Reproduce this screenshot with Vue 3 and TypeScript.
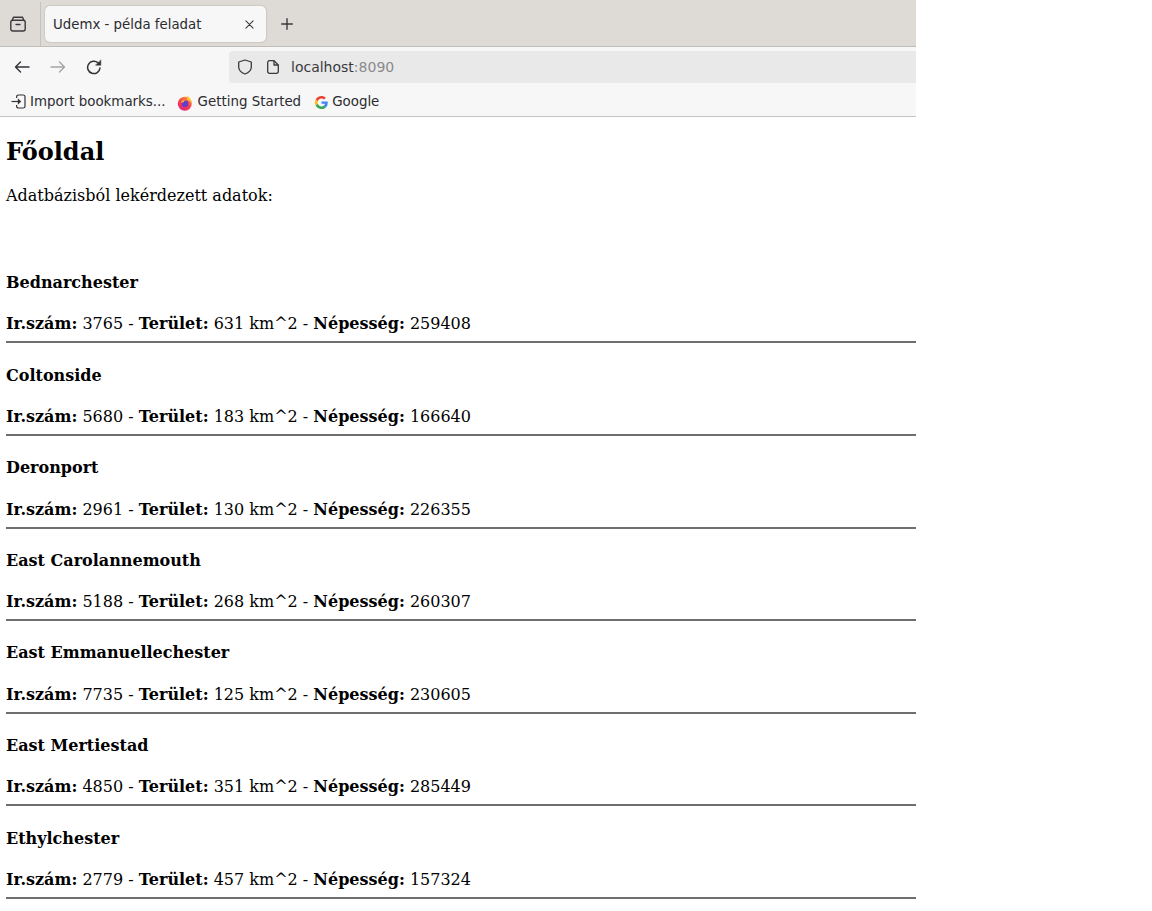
<script setup lang="ts">
interface City { name: string; zip: number; area: number; pop: number }
const cities: City[] = [
  { name: 'Bednarchester', zip: 3765, area: 631, pop: 259408 },
  { name: 'Coltonside', zip: 5680, area: 183, pop: 166640 },
  { name: 'Deronport', zip: 2961, area: 130, pop: 226355 },
  { name: 'East Carolannemouth', zip: 5188, area: 268, pop: 260307 },
  { name: 'East Emmanuellechester', zip: 7735, area: 125, pop: 230605 },
  { name: 'East Mertiestad', zip: 4850, area: 351, pop: 285449 },
  { name: 'Ethylchester', zip: 2779, area: 457, pop: 157324 },
]
</script>

<template>
  <div class="window">
    <div class="tabbar">
      <div class="tabs-btn">
        <svg width="16" height="16" viewBox="0 0 16 16" fill="none" stroke="#3a3a3e" stroke-width="1.4">
          <path d="M3.500 1.200h9" stroke-linecap="round" />
          <path d="M2.200 4.200l1.300-3M13.800 4.200l-1.300-3" />
          <rect x="0.800" y="4.300" width="14.400" height="10.700" rx="2" />
          <path d="M6 8.500h4" stroke-linecap="round" />
        </svg>
      </div>
      <div class="tab">
        <span class="tab-title">Udemx - példa feladat</span>
        <svg class="tab-x" width="9" height="9" viewBox="0 0 10 10" stroke="#3a3a3e" stroke-width="1.200" stroke-linecap="round">
          <path d="M1 1l8 8M9 1l-8 8" />
        </svg>
      </div>
      <svg class="plus" width="12" height="12" viewBox="0 0 12 12" stroke="#3a3a3e" stroke-width="1.400" stroke-linecap="round">
        <path d="M6 .7v10.600M.7 6h10.600" />
      </svg>
    </div>
    <div class="navbar">
      <svg class="nav-ico" width="16" height="16" viewBox="0 0 16 16" fill="none" stroke="#333338" stroke-width="1.400" stroke-linecap="round" stroke-linejoin="round">
        <path d="M15 8H1.500M6.500 3l-5 5 5 5" />
      </svg>
      <svg class="nav-ico" width="16" height="16" viewBox="0 0 16 16" fill="none" stroke="#a5a5a8" stroke-width="1.400" stroke-linecap="round" stroke-linejoin="round">
        <path d="M1 8h13.500M9.500 3l5 5-5 5" />
      </svg>
      <svg class="nav-ico" width="16" height="16" viewBox="0 0 16 16" fill="none" stroke="#333338" stroke-width="1.500" stroke-linecap="round" stroke-linejoin="round">
        <path d="M14 9a6.200 6.200 0 1 1-2-5.200" />
        <path d="M14.800 1.200v5h-5z" fill="#333338" stroke-width="0.500" />
      </svg>
      <div class="urlbar">
        <svg width="16" height="16" viewBox="0 0 16 16" fill="none" stroke="#3a3a3e" stroke-width="1.300" stroke-linejoin="round">
          <path d="M8 1l6.300 2v5c0 3.500-3 5.800-6.300 7-3.300-1.200-6.300-3.500-6.300-7V3z" />
        </svg>
        <svg class="page" width="14" height="16" viewBox="0 0 14 16" fill="none" stroke="#3a3a3e" stroke-width="1.300" stroke-linejoin="round">
          <path d="M3 1.700h5L12.300 6v6.500a1.800 1.800 0 0 1-1.800 1.800h-7a1.800 1.800 0 0 1-1.800-1.800v-9A1.800 1.800 0 0 1 3 1.700z" />
          <path d="M8 1.700V6h4.300" />
        </svg>
        <span class="url">localhost<span class="port">:8090</span></span>
      </div>
    </div>
    <div class="bookmarks">
      <div class="bm bm-import">
        <svg width="15" height="15" viewBox="0 0 15 15" fill="none" stroke="#333338" stroke-width="1.200" stroke-linejoin="round">
          <path d="M5.600 4V2.800a1.800 1.800 0 0 1 1.800-1.800h4.800a1.800 1.800 0 0 1 1.800 1.800v9.400a1.800 1.800 0 0 1-1.800 1.800H7.400a1.800 1.800 0 0 1-1.800-1.800V11" />
          <path d="M.5 7.500h8" />
          <path d="M6.800 4.300v6.400l3.400-3.200z" fill="#333338" stroke="none" />
        </svg>
        <span>Import bookmarks...</span>
      </div>
      <div class="bm bm-ff">
        <svg width="16" height="16" viewBox="0 0 16 16">
          <defs>
            <linearGradient id="ffg" x1="0.800" y1="0" x2="0.200" y2="1">
              <stop offset="0" stop-color="#ff9a2e" />
              <stop offset="0.500" stop-color="#f5414f" />
              <stop offset="1" stop-color="#e0247f" />
            </linearGradient>
          </defs>
          <circle cx="7.800" cy="8.700" r="7" fill="url(#ffg)" />
          <path d="M9.500.6c3 1.500 5.300 4 5.400 8-1-2-2.700-3.500-5-3.800.6-1.400.4-2.900-.4-4.200z" fill="#ffc93a" />
          <circle cx="8" cy="8.700" r="3.400" fill="#6b3ac6" />
          <path d="M3.800 7.400c.8-2 3.500-3.300 6.200-2.300-1.700.1-2.900.7-3.300 2.100-1 .2-2 .3-2.900.2z" fill="#ffa53a" />
        </svg>
        <span>Getting Started</span>
      </div>
      <div class="bm bm-g">
        <svg width="13" height="13" viewBox="0 0 48 48">
          <path fill="#EA4335" d="M24 9.500c3.500 0 6.700 1.200 9.200 3.600l6.900-6.900C35.900 2.400 30.500 0 24 0 14.600 0 6.500 5.400 2.600 13.200l8 6.200C12.500 13.700 17.800 9.500 24 9.500z" />
          <path fill="#4285F4" d="M47 24.500c0-1.600-.1-3.100-.4-4.500H24v9h12.900c-.6 3-2.200 5.500-4.700 7.200l7.700 6C44.400 37.900 47 31.800 47 24.500z" />
          <path fill="#FBBC05" d="M10.500 28.600c-.5-1.400-.8-3-.8-4.600s.3-3.200.8-4.600l-8-6.200C.9 16.500 0 20.100 0 24s.9 7.500 2.600 10.800z" />
          <path fill="#34A853" d="M24 48c6.500 0 11.900-2.100 15.900-5.800l-7.700-6c-2.200 1.400-4.900 2.300-8.200 2.300-6.200 0-11.500-4.200-13.400-9.900l-8 6.200C6.500 42.600 14.600 48 24 48z" />
        </svg>
        <span>Google</span>
      </div>
    </div>
    <main class="page-body">
      <h1>Főoldal</h1>
      <p class="lead">Adatbázisból lekérdezett adatok:</p>
      <section class="list">
        <article v-for="c in cities" :key="c.name" class="city">
          <h4>{{ c.name }}</h4>
          <p><b>Ir.szám:</b> {{ c.zip }} - <b>Terület:</b> {{ c.area }} km^2 - <b>Népesség:</b> {{ c.pop }}</p>
          <hr />
        </article>
      </section>
    </main>
  </div>
</template>

<style>
html, body { margin: 0; padding: 0; background: #fff; overflow: hidden; }
</style>

<style scoped>
.window {
  width: 916px;
  height: 911px;
  overflow: hidden;
  font-family: "DejaVu Sans", sans-serif;
}
.tabbar {
  height: 46px;
  background: #dedbd6;
  border-bottom: 1px solid #bfbdb8;
  display: flex;
  align-items: center;
}
.tabs-btn {
  box-sizing: border-box;
  width: 41px;
  height: 44px;
  margin-top: 2px;
  border-right: 1px solid #c5c3be;
  display: flex;
  align-items: center;
  padding-left: 10px;
}
.tab {
  margin-left: 4px;
  margin-top: 2px;
  width: 221px;
  height: 36px;
  box-sizing: border-box;
  background: #f7f7f7;
  border-radius: 5px;
  box-shadow: 0 0 2px rgba(0, 0, 0, 0.25);
  display: flex;
  align-items: center;
  padding: 0 12px 0 8px;
  font-size: 13.330px;
  color: #2b2b30;
}
.tab-title { flex: 1; }
.plus { margin-left: 15px; margin-top: 2px; }
.navbar {
  height: 32px;
  background: #f7f7f7;
  display: flex;
  align-items: center;
  padding: 4px 0 0 14px;
}
.nav-ico { margin-right: 20px; flex: none; }
.urlbar {
  margin-left: 107px;
  flex: 1;
  height: 32px;
  background: #e9e9e9;
  border-radius: 4px 0 0 4px;
  display: flex;
  align-items: center;
  padding-left: 8px;
  font-size: 14px;
  color: #3a3a3e;
}
.page { margin-left: 13px; }
.url { margin-left: 11px; }
.port { color: #8a8a8e; }
.bookmarks {
  height: 29px;
  padding-top: 4px;
  background: #f7f7f7;
  border-bottom: 1px solid #c4c4c4;
  display: flex;
  align-items: center;
  font-size: 13.400px;
  color: #2b2b30;
}
.bm { display: flex; align-items: center; }
.bm-import { margin-left: 11px; gap: 4px; }
.bm-ff { margin-left: 11px; gap: 5px; margin-top: 2px; }
.bm-ff span { margin-top: -2px; }
.bm-g { margin-left: 14px; gap: 4px; }
.bm-g svg { margin-top: 2px; }
.page-body {
  padding: 0 0 0 6px;
  font-family: "DejaVu Serif", serif;
  font-size: 16px;
  color: #000;
}
h1 { font-size: 24px; margin: 18px 0 0; line-height: 34px; }
.lead { margin: 17px 0 0; line-height: 19px; }
.list { margin-top: 68px; }
.city { height: 92.600px; }
h4 { margin: 0; font-size: 16px; line-height: 19px; }
.city p { margin: 22.400px 0 0; line-height: 19px; }
hr { margin: 8px 0 0; border: 0; border-top: 2px solid #6e6e6e; }
</style>
